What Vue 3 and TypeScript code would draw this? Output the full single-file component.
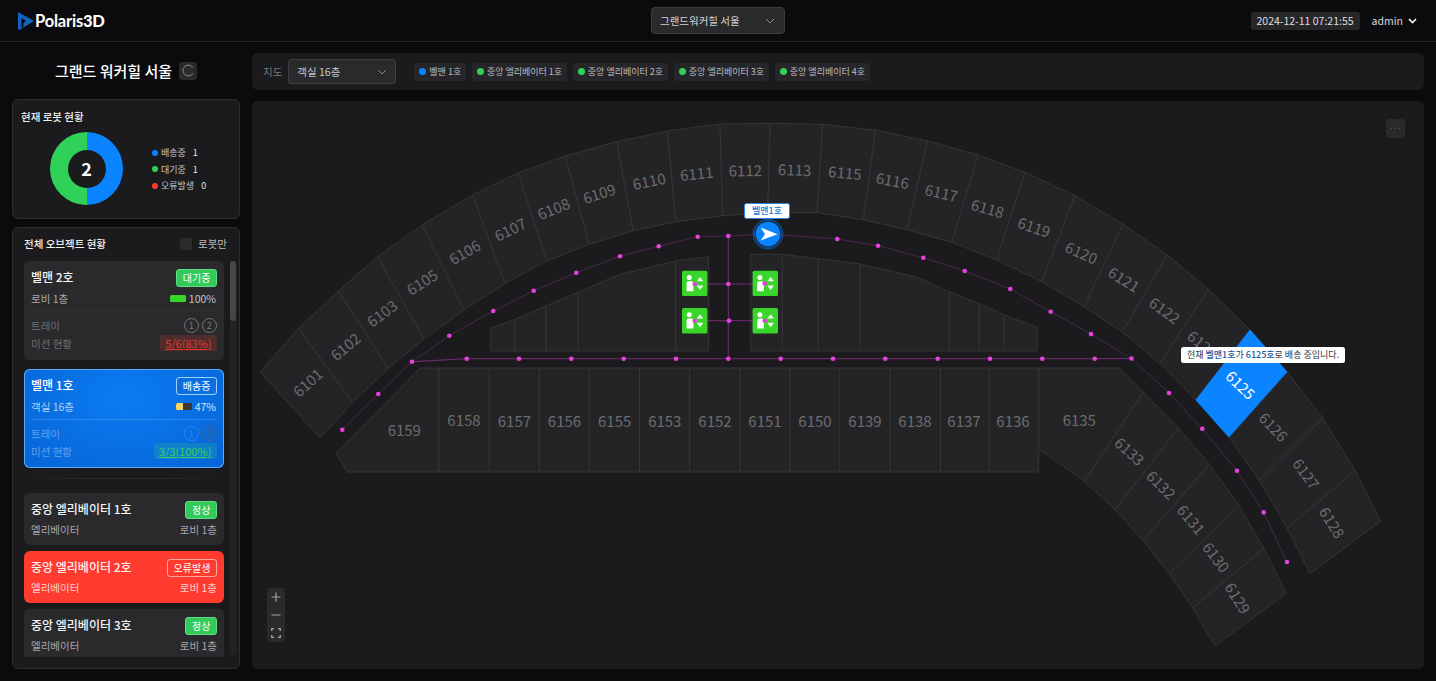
<template>
	<div class="page">
		<header class="topbar">
			<div class="logo">
				<svg width="16" height="18" viewBox="0 0 16 18">
					<path d="M0 0 L16 9 L1.5 18 L0 17 Z" fill="#1262c4" />
					<path d="M3.5 6 L8 9 L5.5 11 L5.5 15 L3.5 16 Z" fill="#0a0a0d" />
				</svg>
				<span>Polaris<b>3D</b></span>
			</div>
			<div class="hotel-select">
				<span>그랜드워커힐 서울</span>
				<svg width="10" height="6" viewBox="0 0 10 6"><path d="M1 1 L5 5 L9 1" class="chev" /></svg>
			</div>
			<div class="top-right">
				<span class="clock">2024-12-11 07:21:55</span>
				<span class="user">admin</span>
				<svg width="9" height="6" viewBox="0 0 9 6"><path d="M1 1 L4.5 4.5 L8 1" class="chev white" /></svg>
			</div>
		</header>

		<main class="body">
			<aside class="side">
				<div class="side-title">
					<h1>그랜드 워커힐 서울</h1>
					<button class="refresh">
						<svg width="13" height="13" viewBox="0 0 13 13">
							<path d="M11 3.6 A5.4 5.4 0 1 0 11 9.4" fill="none" stroke="#8a8a8d" stroke-width="1" />
						</svg>
					</button>
				</div>

				<section class="panel robots">
					<h2>현재 로봇 현황</h2>
					<div class="robots-body">
						<div class="donut"><b>2</b></div>
						<ul class="legend">
							<li v-for="l in legend" :key="l.label">
								<i :style="{ background: l.color }"></i>
								<span>{{ l.label }}</span>
								<em>{{ l.value }}</em>
							</li>
						</ul>
					</div>
				</section>

				<section class="panel objects">
					<div class="objects-head">
						<h2>전체 오브젝트 현황</h2>
						<label><i class="check"></i>로봇만</label>
					</div>
					<div class="objects-body">
						<div class="list">
							<!-- 로봇 -->
							<article v-for="r in robots" :key="r.name" class="card robot" :class="{ active: r.active }">
								<div class="card-head">
									<strong>{{ r.name }}</strong>
									<span class="badge" :class="r.badgeClass">{{ r.status }}</span>
								</div>
								<div class="card-row">
									<span>{{ r.floor }}</span>
									<span class="battery-wrap">
										<span class="battery">
											<span :style="{ width: r.battery + '%', background: r.batteryColor }"></span>
										</span>
										{{ r.battery }}%
									</span>
								</div>
								<div class="divider"></div>
								<div class="card-row muted tray">
									<span>트레이</span>
									<span class="trays">
										<i class="first">1</i>
										<i>2</i>
									</span>
								</div>
								<div class="card-row muted mission">
									<span>미션 현황</span>
									<span class="score">{{ r.mission }}</span>
								</div>
							</article>

							<div class="fade-line"></div>

							<!-- 엘리베이터 -->
							<article v-for="e in elevators" :key="e.name" class="card lift" :class="{ error: e.error }">
								<div class="card-head">
									<strong>{{ e.name }}</strong>
									<span class="badge" :class="e.error ? 'outline' : 'green'">{{ e.status }}</span>
								</div>
								<div class="card-row">
									<span>엘리베이터</span>
									<span>로비 1층</span>
								</div>
							</article>
						</div>
						<div class="scroll"><span></span></div>
					</div>
				</section>
			</aside>

			<div class="content">
				<div class="filter">
					<span class="filter-label">지도</span>
					<div class="floor-select">
						<span>객실 16층</span>
						<svg width="10" height="6" viewBox="0 0 10 6"><path d="M1 1 L5 5 L9 1" class="chev" /></svg>
					</div>
					<div class="chips">
						<span v-for="c in chips" :key="c.label" class="chip">
							<i :style="{ background: c.color }"></i>{{ c.label }}
						</span>
					</div>
				</div>

				<div class="map">
					<svg class="map-svg" viewBox="252 101 1172 568" width="1172" height="568">
						<polygon
							v-for="room in rooms"
							:key="room.key"
							:points="room.points"
							:class="['room', { selected: room.key === 'r6125' }]"
						/>
						<text
							v-for="t in labels"
							:key="t.id"
							:class="['room-no', { selected: t.id === '6125' }]"
							:transform="`translate(${t.x} ${t.y - 1.2}) rotate(${t.r})`"
						>{{ t.id }}</text>

						<polyline :points="mainLine" class="route dim" />
						<polyline v-for="(line, i) in lines" :key="i" :points="line" class="route" />
						<circle v-for="(p, i) in nodes" :key="'n' + i" :cx="p[0]" :cy="p[1]" r="2.3" class="node" />

						<g v-for="(p, i) in lifts" :key="'l' + i" :transform="`translate(${p[0]} ${p[1]})`">
							<rect width="25.4" height="25.4" rx="1.5" fill="#3ad52b" />
							<circle cx="7.3" cy="6.7" r="2.5" fill="#fff" />
							<path d="M4.6 12.5 Q4.6 10.6 6.5 10.6 H9.4 Q11.4 10.6 11.4 12.5 V20.6 H4.6 Z" fill="#fff" />
							<path d="M18 6.2 L21.4 10.6 H14.6 Z M18 19.2 L14.6 14.8 H21.4 Z" fill="#fff" fill-opacity=".9" />
						</g>
						<circle v-for="(p, i) in liftDots" :key="'d' + i" :cx="p[0]" :cy="p[1]" r="2.3" class="node" />

						<g>
							<circle cx="768" cy="234" r="15" class="halo" />
							<circle cx="768" cy="234" r="13.6" class="halo" />
							<circle cx="768" cy="234" r="12.3" fill="#0a84ff" />
							<path d="M760.7 227.6 L777.4 234.3 L760.7 240.6 L765 234.2 Z" fill="#fff" />
						</g>
					</svg>

					<span class="robot-tag">벨맨1호</span>
					<div class="tip">현재 <b>벨맨1호</b>가 <b>6125호</b>로 배송 중입니다.</div>

					<button class="more">···</button>
					<div class="zoom-box">
						<button>
							<svg width="10" height="10" viewBox="0 0 10 10"><path d="M5 .5 V9.5 M.5 5 H9.5" class="tool" /></svg>
						</button>
						<button>
							<svg width="10" height="10" viewBox="0 0 10 10"><path d="M.5 5 H9.5" class="tool" /></svg>
						</button>
						<button>
							<svg width="10" height="10" viewBox="0 0 10 10">
								<path d="M.7 3 V.7 H3 M7 .7 H9.3 V3 M9.3 7 V9.3 H7 M3 9.3 H.7 V7" class="tool" />
							</svg>
						</button>
					</div>
				</div>
			</div>
		</main>
	</div>
</template>

<script setup lang="ts">
type Pt = [number, number];

const legend = [
	{ label: '배송중', value: 1, color: '#0a84ff' },
	{ label: '대기중', value: 1, color: '#30d158' },
	{ label: '오류발생', value: 0, color: '#ff3b30' },
];

const robots = [
	{
		name: '벨맨 2호',
		status: '대기중',
		badgeClass: 'green',
		floor: '로비 1층',
		battery: 100,
		batteryColor: '#3ad52b',
		mission: '5/6(83%)',
		active: false,
	},
	{
		name: '벨맨 1호',
		status: '배송중',
		badgeClass: 'blue',
		floor: '객실 16층',
		battery: 47,
		batteryColor: '#f8d665',
		mission: '3/3(100%)',
		active: true,
	},
];

const elevators = [
	{ name: '중앙 엘리베이터 1호', status: '정상', error: false },
	{ name: '중앙 엘리베이터 2호', status: '오류발생', error: true },
	{ name: '중앙 엘리베이터 3호', status: '정상', error: false },
];

const chips = [
	{ label: '벨맨 1호', color: '#0a84ff' },
	{ label: '중앙 엘리베이터 1호', color: '#30d158' },
	{ label: '중앙 엘리베이터 2호', color: '#30d158' },
	{ label: '중앙 엘리베이터 3호', color: '#30d158' },
	{ label: '중앙 엘리베이터 4호', color: '#30d158' },
];

// 외곽 호실 링
const arcIds = [6101, 6102, 6103, 6105, 6106, 6107, 6108, 6109, 6110, 6111, 6112, 6113, 6115, 6116, 6117, 6118, 6119, 6120, 6121, 6122, 6123, 6125, 6126, 6127, 6128];
const arcOuter: Pt[] = [
	[260, 372], [298.7, 328.3], [338.3, 291], [377.7, 256.7], [422, 225], [472.7, 195], [518.3, 172.7], [565.3, 156],
	[616.7, 141.7], [667.3, 131], [720, 124], [770, 123.3], [822.7, 124.3], [875.7, 130.3], [927.7, 141], [978, 155],
	[1025, 172.3], [1075, 195.7], [1123, 224.3], [1167.3, 255], [1208.3, 289.3], [1250, 330], [1287.3, 372.3],
	[1322.7, 418], [1355, 470.4], [1380.7, 521],
];
const arcInner: Pt[] = [
	[320, 437.7], [352.7, 402.7], [388.3, 368.3], [424, 339], [464, 310], [505, 283.3], [546.7, 261], [589.3, 244.3],
	[633.3, 230.7], [676, 221.7], [722.7, 215.7], [767.7, 212.7], [817, 212.7], [863.3, 219.7], [907, 229.7], [952, 242.3],
	[996.7, 260], [1041.7, 281.7], [1084.3, 306.7], [1122.3, 332], [1160, 363.5], [1196, 400], [1229.3, 437.5],
	[1259.3, 480.4], [1287.3, 528.6], [1310, 573.7],
];

// 하단 우측 링
const lowOuter: Pt[] = [[1143.3, 392], [1178.3, 428], [1209.3, 464.2], [1238.7, 505], [1264, 548.6], [1286, 593.3]];
const lowInner: Pt[] = [[1084.3, 481], [1115, 509.7], [1143.3, 540.6], [1169.3, 573.7], [1192.7, 607.8], [1215, 646]];

const toPoints = (pts: Pt[]) => pts.map((p) => p.join(',')).join(' ');

const rooms: { key: string; points: string }[] = [];
arcIds.forEach((id, i) => {
	rooms.push({ key: 'r' + id, points: toPoints([arcOuter[i], arcOuter[i + 1], arcInner[i + 1], arcInner[i]]) });
});
for (let i = 0; i < 5; i++) {
	rooms.push({ key: 'low' + i, points: toPoints([lowOuter[i], lowOuter[i + 1], lowInner[i + 1], lowInner[i]]) });
}
// 6135, 6159
rooms.push({ key: 'r6135', points: toPoints([[1038.7, 368], [1119.3, 368], [1143.3, 392], [1084.3, 481], [1038.7, 449]]) });
rooms.push({ key: 'r6159', points: toPoints([[420, 368], [439, 368], [439, 472], [347, 472], [336, 453.3]]) });

// 하단 일자 호실
const bottomX = [439, 489.3, 539.3, 589.4, 639.5, 689.7, 739.9, 790, 839.8, 890.2, 940.4, 989.4, 1038.7];
bottomX.slice(0, -1).forEach((x, i) => {
	rooms.push({ key: 'b' + i, points: toPoints([[x, 368], [bottomX[i + 1], 368], [bottomX[i + 1], 472], [x, 472]]) });
});

// 중앙 블록: 지붕선 꼭짓점을 따라 칸을 나눈다
const roofRoom = (key: string, roof: Pt[], bottom = 351) => {
	rooms.push({ key, points: toPoints([...roof, [roof[roof.length - 1][0], bottom], [roof[0][0], bottom]]) });
};
roofRoom('c1', [[490.7, 328.3], [515, 319.3]]);
roofRoom('c2', [[515, 319.3], [546, 306]]);
roofRoom('c3', [[546, 306], [578.3, 292]]);
roofRoom('c4', [[578.3, 292], [620, 274.3], [675.7, 261]]);
roofRoom('c5', [[675.7, 261], [708.7, 256.7]]);
roofRoom('c6', [[750.7, 254.3], [782.3, 254.3]]);
roofRoom('c7', [[782.3, 254.3], [818.3, 258.7]]);
roofRoom('c8', [[818.3, 258.7], [860.3, 264]]);
roofRoom('c9', [[860.3, 264], [916.7, 277.3], [949.3, 291.7]]);
roofRoom('c10', [[949.3, 291.7], [979.3, 303.7]]);
roofRoom('c11', [[979.3, 303.7], [1004.3, 315]]);
roofRoom('c12', [[1004.3, 315], [1037.3, 327.3]]);

const labels = [
	{ id: '6101', x: 307.3, y: 383.3, r: -42 },
	{ id: '6102', x: 345, y: 347.3, r: -40 },
	{ id: '6103', x: 381.7, y: 314, r: -37 },
	{ id: '6105', x: 421.7, y: 282.7, r: -33 },
	{ id: '6106', x: 464.3, y: 252.7, r: -30 },
	{ id: '6107', x: 510, y: 230, r: -26 },
	{ id: '6108', x: 553.3, y: 209.3, r: -22 },
	{ id: '6109', x: 599, y: 194, r: -18 },
	{ id: '6110', x: 649, y: 181.7, r: -12 },
	{ id: '6111', x: 696.7, y: 174, r: -6 },
	{ id: '6112', x: 745.3, y: 171, r: -1 },
	{ id: '6113', x: 794.7, y: 170.3, r: 2 },
	{ id: '6115', x: 845, y: 173.3, r: 5 },
	{ id: '6116', x: 892.7, y: 181, r: 10 },
	{ id: '6117', x: 941.7, y: 193.3, r: 13 },
	{ id: '6118', x: 987.7, y: 209, r: 16 },
	{ id: '6119', x: 1034.3, y: 227.7, r: 19 },
	{ id: '6120', x: 1081.7, y: 253.3, r: 24 },
	{ id: '6121', x: 1124.3, y: 280, r: 32 },
	{ id: '6122', x: 1165, y: 311, r: 36 },
	{ id: '6123', x: 1203, y: 345, r: 40 },
	{ id: '6125', x: 1241, y: 385.7, r: 44 },
	{ id: '6126', x: 1274, y: 427.7, r: 46 },
	{ id: '6127', x: 1306.7, y: 474.6, r: 54 },
	{ id: '6128', x: 1332.7, y: 523.5, r: 58 },
	{ id: '6129', x: 1238.3, y: 599, r: 58 },
	{ id: '6130', x: 1216.7, y: 558, r: 53 },
	{ id: '6131', x: 1191.7, y: 520.3, r: 50 },
	{ id: '6132', x: 1161.7, y: 485.6, r: 45 },
	{ id: '6133', x: 1130, y: 452, r: 42 },
	{ id: '6135', x: 1079.3, y: 420.5, r: 0 },
	{ id: '6136', x: 1013, y: 422, r: 0 },
	{ id: '6137', x: 964, y: 422, r: 0 },
	{ id: '6138', x: 915, y: 422, r: 0 },
	{ id: '6139', x: 865, y: 421.5, r: 0 },
	{ id: '6150', x: 815, y: 421.5, r: 0 },
	{ id: '6151', x: 765, y: 421.5, r: 0 },
	{ id: '6152', x: 715, y: 421.5, r: 0 },
	{ id: '6153', x: 664.8, y: 421.5, r: 0 },
	{ id: '6155', x: 614.7, y: 421.5, r: 0 },
	{ id: '6156', x: 564.5, y: 421.5, r: 0 },
	{ id: '6157', x: 514.4, y: 421.5, r: 0 },
	{ id: '6158', x: 464, y: 421, r: 0 },
	{ id: '6159', x: 404.3, y: 430.7, r: 0 },
];

// 로봇 경로
const mainRoute: Pt[] = [
	[342.3, 429.7], [378.3, 394], [412, 361.7], [449.3, 335.7], [493.3, 311], [533.7, 290.7], [576.3, 272.7], [620, 256.3],
	[658.7, 246.3], [697.7, 236.7], [728.3, 236], [768, 234], [837.3, 239], [878, 245.7], [923.3, 257.7], [964.7, 271],
	[1010.3, 289], [1050.7, 311.7], [1091, 334], [1131.5, 358.5], [1169, 393], [1202.3, 428.8], [1237, 470.8],
	[1263.7, 512.4], [1287, 562],
];
const railX = [466.7, 519, 571.3, 623.7, 676, 728.3, 780.7, 833, 885.3, 937.7, 990, 1042.3, 1094.7];
const railRoute: Pt[] = [[412, 361.7], ...railX.map((x): Pt => [x, 358.7]), [1131.5, 358.5]];
const branches: Pt[][] = [
	[[728.3, 236], [728.3, 358.7]],
	[[694.7, 284], [764.7, 284]],
	[[694.7, 320.7], [764.7, 320.7]],
];

const mainLine = toPoints(mainRoute);
const lines = [railRoute, ...branches].map(toPoints);
const nodes: Pt[] = [
	...mainRoute.filter((p) => p[0] !== 768),
	...railX.map((x): Pt => [x, 358.7]),
	[728.3, 284],
	[729, 320.7],
];
const lifts: Pt[] = [[682, 270.7], [752.6, 270.7], [682, 308], [752.6, 308]];
const liftDots: Pt[] = [[694.7, 284], [764.7, 283.5], [694.7, 320.7], [764.7, 320.7]];
</script>

<style>
html,
body {
	margin: 0;
	background: #0b0b0e;
	overflow: hidden;
}
</style>

<style scoped>
.page {
	width: 1436px;
	height: 681px;
	background: #0b0b0e;
	color: #fff;
	font-family: 'Noto Sans CJK KR', 'Noto Sans', sans-serif;
	font-size: 10.5px;
	overflow: hidden;
}

h1,
h2,
ul {
	margin: 0;
	padding: 0;
}

button {
	padding: 0;
	border: 0;
	font: inherit;
}

.chev {
	fill: none;
	stroke: #8b8b8e;
	stroke-width: 1;
}

.chev.white {
	stroke: #fff;
	stroke-width: 1.6;
}

.topbar {
	position: relative;
	height: 41px;
	border-bottom: 1px solid #252528;
	display: flex;
	align-items: center;
	justify-content: space-between;
	padding: 0 19px 0 18px;
}

.logo {
	display: flex;
	align-items: center;
	gap: 1px;
	font-family: Lato, sans-serif;
	font-size: 16.5px;
	font-weight: 700;
	letter-spacing: -0.2px;
}

.logo b {
	font-weight: 900;
}

.hotel-select {
	position: absolute;
	left: 651px;
	top: 7px;
	width: 134px;
	height: 27px;
	box-sizing: border-box;
	padding: 0 9px 0 8px;
	display: flex;
	align-items: center;
	justify-content: space-between;
	background: #2a2a2d;
	border: 1px solid #3d3d40;
	border-radius: 4px;
	color: #d4d4d6;
}

.top-right {
	display: flex;
	align-items: center;
}

.clock {
	height: 18px;
	line-height: 18px;
	padding: 0 6px;
	border-radius: 3px;
	background: #27272a;
	color: #dedee0;
}

.user {
	margin: 0 5px 0 12px;
	color: #d8d8da;
}

.body {
	display: flex;
	padding: 0 12px;
	gap: 12px;
}

.side {
	width: 228px;
	flex: none;
	display: flex;
	flex-direction: column;
}

.side-title {
	height: 57px;
	box-sizing: border-box;
	display: flex;
	align-items: center;
	justify-content: center;
	gap: 7px;
}

.side-title h1 {
	font-size: 15px;
	font-weight: 500;
}

.refresh {
	width: 18px;
	height: 18px;
	display: flex;
	align-items: center;
	justify-content: center;
	background: #2a2a2d;
	border-radius: 3px;
}

.panel {
	box-sizing: border-box;
	background: #1b1b1e;
	border: 1px solid #2c2c2f;
	border-radius: 6px;
}

.panel h2 {
	font-size: 10.5px;
	font-weight: 500;
	color: #f2f2f3;
}

.robots {
	height: 120px;
	padding: 9px 8px;
}

.robots-body {
	display: flex;
	align-items: center;
	margin-top: 8px;
}

.donut {
	width: 73px;
	height: 73px;
	margin-left: 29px;
	border-radius: 50%;
	background: linear-gradient(90deg, #30d158 50%, #0a84ff 50%);
	display: flex;
	align-items: center;
	justify-content: center;
}

.donut b {
	width: 38px;
	height: 38px;
	border-radius: 50%;
	background: #1b1b1e;
	text-align: center;
	line-height: 37px;
	font-size: 18px;
	font-weight: 700;
}

.legend {
	list-style: none;
	margin: 1px 0 0 29px;
	font-size: 9px;
	color: #c8c8ca;
}

.legend li {
	display: flex;
	align-items: center;
	height: 16.5px;
}

.legend i {
	width: 6px;
	height: 6px;
	border-radius: 50%;
	margin-right: 3px;
}

.legend em {
	margin-left: 7px;
	font-style: normal;
	color: #e6e6e8;
}

.objects {
	height: 442px;
	margin-top: 8px;
	padding: 0 3px 0 11px;
	overflow: hidden;
}

.objects-head {
	height: 33px;
	padding-bottom: 2px;
	box-sizing: border-box;
	display: flex;
	align-items: center;
	justify-content: space-between;
	padding-right: 9px;
}

.objects-head label {
	display: flex;
	align-items: center;
	gap: 6px;
	color: #b9b9bc;
}

.check {
	width: 12px;
	height: 12px;
	border-radius: 2px;
	background: #2a2a2d;
}

.objects-body {
	display: flex;
	gap: 6px;
	height: 396px;
}

.list {
	width: 200px;
	flex: none;
	overflow: hidden;
}

.scroll {
	width: 6px;
	height: 394px;
	border-radius: 3px;
	background: #232326;
}

.scroll span {
	display: block;
	height: 60px;
	border-radius: 3px;
	background: #47474a;
}

.card {
	box-sizing: border-box;
	padding: 8px 7px;
	border-radius: 6px;
	background: #2a2a2d;
	color: #a8a8ab;
}

.robot {
	height: 99px;
}

.robot + .robot {
	margin-top: 9px;
}

.lift {
	height: 51.5px;
	padding-bottom: 5px;
	margin-top: 6.5px;
}

.card-head {
	display: flex;
	align-items: center;
	justify-content: space-between;
	height: 18px;
	margin-bottom: 3px;
}

.lift .card-head {
	margin-bottom: 2px;
}

.card-head strong {
	padding-bottom: 3px;
	font-size: 12px;
	font-weight: 500;
	color: #f4f4f5;
}

.badge {
	box-sizing: border-box;
	height: 18px;
	line-height: 16px;
	padding: 0 5.6px;
	border-radius: 3px;
	font-size: 10px;
	color: #fff;
	border: 1px solid transparent;
}

.badge.green {
	background: #30c95a;
	border-color: #5fdc85;
}

.badge.blue {
	background: #0a6fe0;
	border-color: #9fd0ff;
}

.badge.outline {
	border-color: rgba(255, 255, 255, 0.55);
}

.card-row {
	display: flex;
	align-items: center;
	justify-content: space-between;
	height: 16px;
}

.battery-wrap {
	display: flex;
	align-items: center;
	gap: 3px;
	padding-right: 1px;
	color: #c4c4c6;
}

.battery {
	width: 16px;
	height: 7px;
	border-radius: 1.5px;
	background: #38383b;
	overflow: hidden;
}

.battery span {
	display: block;
	height: 100%;
}

.divider {
	height: 1px;
	margin-top: 5px;
	background: rgba(255, 255, 255, 0.03);
}

.muted {
	color: #6f6f72;
}

.tray {
	margin-top: 5px;
	margin-bottom: 2px;
}

.trays {
	display: flex;
	gap: 3px;
}

.trays i {
	box-sizing: border-box;
	width: 15px;
	height: 15px;
	border: 1px solid #77777a;
	border-radius: 50%;
	text-align: center;
	line-height: 13px;
	font-style: normal;
	font-size: 9.5px;
	color: #77777a;
}

.score {
	height: 16px;
	line-height: 16px;
	padding: 0 5.5px;
	border-radius: 2px;
	background: rgba(255, 59, 48, 0.18);
	font-size: 11px;
	color: #e0372c;
	text-decoration: underline;
	text-decoration-thickness: 0.5px;
}

.robot.active {
	background: radial-gradient(ellipse at 50% 30%, #0a7cf2, #0764d6);
	box-shadow: inset 0 0 0 1px #5aaaf5;
	color: #b4d2f6;
}

.active .card-head strong {
	color: #fff;
}

.active .battery-wrap {
	color: #d6e6fa;
}

.active .divider {
	background: rgba(255, 255, 255, 0.14);
}

.active .muted {
	color: rgba(255, 255, 255, 0.38);
}

.active .trays .first {
	border-color: #2488f5;
	color: #2488f5;
}

.active .trays i:not(.first) {
	border-color: #4c5f7c;
	color: #4c5f7c;
}

.active .score {
	background: rgba(48, 209, 120, 0.2);
	color: #36cf68;
}

.fade-line {
	height: 1px;
	margin: 10px 0 0;
	background: linear-gradient(90deg, transparent, #2b2b2e 30%, #2b2b2e 70%, transparent);
}

.fade-line + .lift {
	margin-top: 14px;
}

.lift.error {
	background: #ff3b30;
	color: rgba(255, 255, 255, 0.78);
}

.lift.error strong {
	color: #fff;
	opacity: 0.92;
}

.content {
	width: 1172px;
	flex: none;
	padding-top: 11px;
}

.filter {
	box-sizing: border-box;
	height: 37px;
	padding: 0 11px;
	display: flex;
	align-items: center;
	background: #1b1b1e;
	border-radius: 6px;
}

.filter-label {
	color: #77777a;
	margin-right: 6px;
}

.floor-select {
	box-sizing: border-box;
	width: 108px;
	height: 25px;
	padding: 0 8px;
	display: flex;
	align-items: center;
	justify-content: space-between;
	background: #2a2a2d;
	border: 1px solid #3e3e41;
	border-radius: 3px;
	color: #c9c9cb;
}

.chips {
	display: flex;
	gap: 5.7px;
	margin-left: 18px;
}

.chip {
	display: flex;
	align-items: center;
	gap: 3px;
	height: 18px;
	padding: 0 5px;
	border-radius: 3px;
	background: #26262a;
	font-size: 9px;
	color: #bcbcbf;
}

.chip i {
	width: 7px;
	height: 7px;
	border-radius: 50%;
}

.map {
	position: relative;
	height: 568px;
	margin-top: 11px;
	background: #1b1b1e;
	border-radius: 6px;
	overflow: hidden;
}

.map-svg {
	position: absolute;
	left: 0;
	top: 0;
}

.room {
	fill: #242427;
	stroke: #353538;
	stroke-width: 1;
}

.room.selected {
	fill: #0a84ff;
	stroke: #0a84ff;
}

.room-no {
	font-size: 15px;
	fill: #6c6c6f;
	text-anchor: middle;
	dominant-baseline: central;
}

.room-no.selected {
	fill: #fff;
}

.route {
	fill: none;
	stroke: #8f308f;
	stroke-width: 0.8;
}

.route.dim {
	stroke: #5f2a60;
	stroke-width: 0.7;
}

.node {
	fill: #e642e0;
}

.halo {
	fill: none;
	stroke: #0a6fd8;
	stroke-width: 0.7;
}

.robot-tag {
	position: absolute;
	left: 492px;
	top: 102px;
	box-sizing: border-box;
	width: 46px;
	height: 15.5px;
	line-height: 13.5px;
	text-align: center;
	background: #fff;
	border: 1px solid #2f86e0;
	border-radius: 2.5px;
	font-size: 9px;
	font-weight: 500;
	color: #2079dc;
}

.tip {
	position: absolute;
	left: 929px;
	top: 246px;
	box-sizing: border-box;
	width: 164px;
	height: 16px;
	line-height: 16px;
	text-align: center;
	background: #fff;
	border-radius: 2.5px;
	font-size: 9px;
	color: #333336;
	white-space: nowrap;
}

.tip b {
	font-weight: 500;
	color: #17589f;
}

.more {
	position: absolute;
	right: 19px;
	top: 18px;
	width: 19px;
	height: 19px;
	border-radius: 3px;
	background: #2a2a2d;
	color: #77777a;
	font-size: 7px;
	line-height: 19px;
}

.zoom-box {
	position: absolute;
	left: 15px;
	top: 487px;
	width: 18px;
	display: flex;
	flex-direction: column;
	border-radius: 3px;
	background: #2a2a2d;
}

.zoom-box button {
	height: 18px;
	display: flex;
	align-items: center;
	justify-content: center;
	background: transparent;
}

.tool {
	fill: none;
	stroke: #a4a4a7;
	stroke-width: 1.2;
}
</style>
